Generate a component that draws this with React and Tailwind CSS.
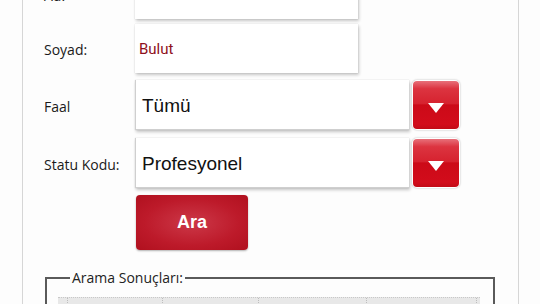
import React from "react";

const inputShadow = "shadow-[1px_2px_3px_rgba(0,0,0,0.22),0_0_1px_rgba(0,0,0,0.18)]";

function Label({ children, className = "" }) {
  return (
    <div className={`w-[91px] shrink-0 flex items-center text-[14px] text-[#1a1a1a] font-['Open_Sans',sans-serif] ${className}`}>
      {children}
    </div>
  );
}

function TextRow({ label, value, className }) {
  return (
    <div className={`flex h-[49px] ${className}`}>
      <Label className="pt-[2px]">{label}</Label>
      <div className={`w-[223px] h-full bg-white ${inputShadow} flex items-center pl-[4px] pt-[2px] text-[15px] text-[#8e1020] font-['Roboto',sans-serif]`}>
        {value}
      </div>
    </div>
  );
}

function SelectRow({ label, value, className }) {
  return (
    <div className={`flex h-[50px] ${className}`}>
      <Label className="pt-[2px]">{label}</Label>
      <div className={`w-[274px] h-full bg-white border-l border-b border-[#cfcfcf] ${inputShadow} flex items-center pl-[6px] pt-[4px] text-[19px] text-[#111] font-['Liberation_Sans',Arial,sans-serif]`}>
        {value}
      </div>
      <div className="ml-[3px] w-[48px] h-[50px] p-[1px] bg-white rounded-[5px] shadow-[0_0_2px_rgba(0,0,0,0.3)]">
        <div className="w-full h-full rounded-[4px] bg-[linear-gradient(to_bottom,#e8707a_0%,#dc3440_16%,#d6222f_47%,#cc0a18_50%,#d20c1b_90%,#c20a16_100%)] flex items-center justify-center">
          <svg width="16" height="10" viewBox="0 0 16 10" className="mt-[6px]">
            <polygon points="0,0 16,0 8,10" fill="#ffffff" />
          </svg>
        </div>
      </div>
    </div>
  );
}

export default function App() {
  const cols = [9, 95, 96, 108, 110, 4];
  return (
    <div className="w-[540px] h-[304px] overflow-hidden bg-[#fdfdfd]">
      <div className="ml-[22px] w-[497px] h-[400px] border-x border-[#d6d6d6] pl-[21px]">
        <TextRow label="Ad:" value="" className="mt-[-30px]" />
        <TextRow label="Soyad:" value="Bulut" className="mt-[5px]" />
        <SelectRow label="Faal" value="Tümü" className="mt-[7px]" />
        <SelectRow label="Statu Kodu:" value="Profesyonel" className="mt-[8px]" />
        <div className="flex mt-[7px]">
          <div className="w-[92px] shrink-0" />
          <div className="w-[112px] h-[55px] rounded-[4px] bg-[radial-gradient(ellipse_at_center,#cc3848_0%,#bd1a2a_60%,#b0101e_100%)] shadow-[0_1px_2px_rgba(0,0,0,0.3)] flex items-center justify-center text-white font-bold text-[18px] font-['Liberation_Sans',Arial,sans-serif]">
            Ara
          </div>
        </div>
        <fieldset className="mt-[18px] ml-[1px] w-[450px] border-2 border-[#5a5a5a] pt-[9px] pl-[11px] pr-[13px] h-[100px]">
          <legend className="ml-[12px] px-[2px] text-[14px] text-[#222] font-['Open_Sans',sans-serif] leading-[20px]">
            Arama Sonuçları:
          </legend>
          <div className="flex h-[30px] bg-[#e8e8e8] border-t border-dotted border-[#c8c8c8]">
            {cols.map((w, i) => (
              <div
                key={i}
                style={{ width: w }}
                className={`h-full ${i > 0 ? "border-l border-dotted border-[#bdbdbd]" : ""}`}
              />
            ))}
          </div>
        </fieldset>
      </div>
    </div>
  );
}
